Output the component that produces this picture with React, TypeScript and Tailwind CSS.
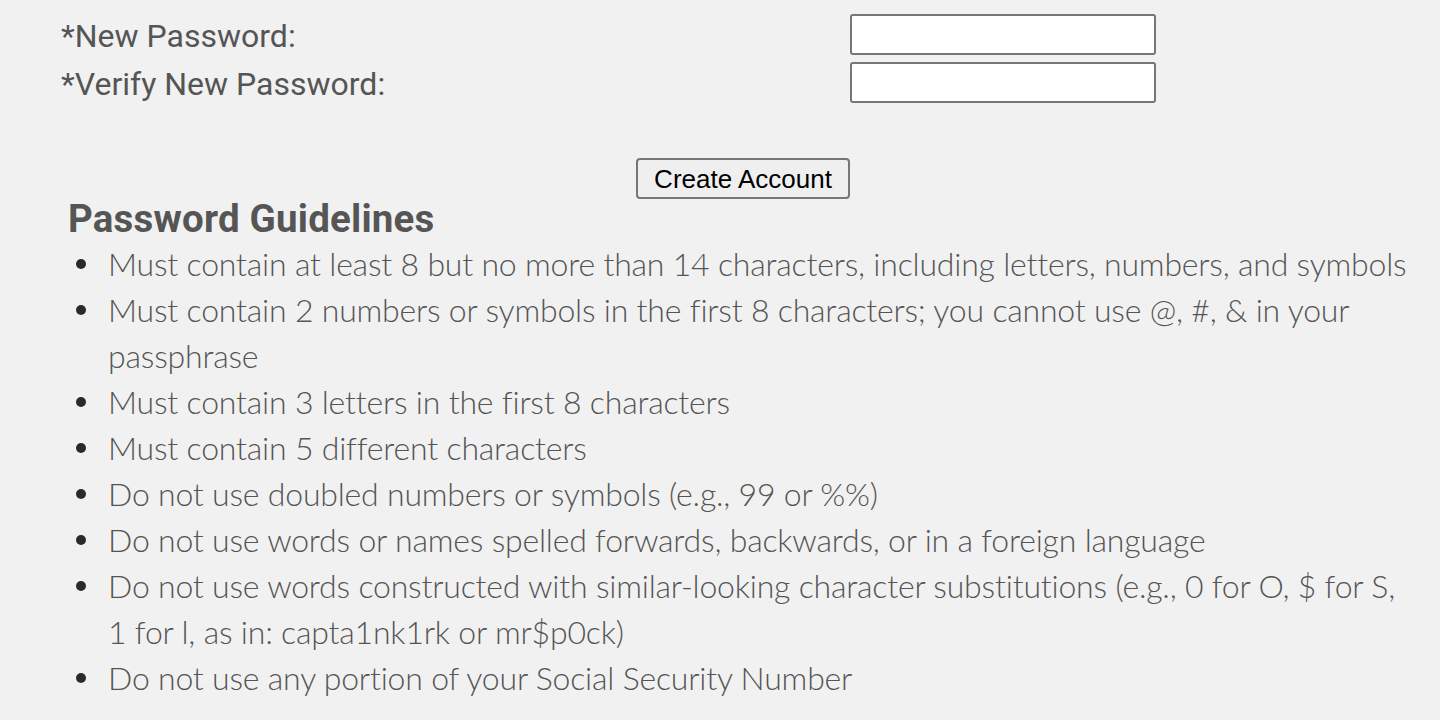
import React from "react";

const items: string[][] = [
  ["Must contain at least 8 but no more than 14 characters, including letters, numbers, and symbols"],
  ["Must contain 2 numbers or symbols in the first 8 characters; you cannot use @, #, & in your", "passphrase"],
  ["Must contain 3 letters in the first 8 characters"],
  ["Must contain 5 different characters"],
  ["Do not use doubled numbers or symbols (e.g., 99 or %%)"],
  ["Do not use words or names spelled forwards, backwards, or in a foreign language"],
  ["Do not use words constructed with similar-looking character substitutions (e.g., 0 for O, $ for S,", "1 for l, as in: capta1nk1rk or mr$p0ck)"],
  ["Do not use any portion of your Social Security Number"],
];

export default function App() {
  return (
    <div className="w-[1440px] h-[720px] overflow-hidden bg-[#f1f1f1] text-[#555]" style={{ fontFamily: "Roboto, 'Liberation Sans', sans-serif" }}>
      <div className="pt-[12px] pl-[61px]">
        <div className="grid grid-cols-[789px_306px]">
          <div className="h-[48px] flex items-center text-[32px] leading-[48px]">*New Password:</div>
          <div className="h-[48px] pt-[2px]">
            <input type="password" className="block w-[306px] h-[41px] bg-white border-2 border-[#767676] rounded-[3px]" />
          </div>
          <div className="h-[48px] flex items-center text-[32px] leading-[48px]">*Verify New Password:</div>
          <div className="h-[48px] pt-[2px]">
            <input type="password" className="block w-[306px] h-[41px] bg-white border-2 border-[#767676] rounded-[3px]" />
          </div>
        </div>
        <div className="w-[1364px] flex justify-center mt-[50px]">
          <button className="w-[214px] h-[41px] bg-[#efefef] border-2 border-[#767676] rounded-[4px] text-black text-[26px] leading-none" style={{ fontFamily: "'Liberation Sans', Arial, sans-serif" }}>
            Create Account
          </button>
        </div>
        <h2 className="ml-[7px] text-[38.5px] font-bold leading-[40px] tracking-[0.2px]">Password Guidelines</h2>
        <ul className="mt-[2px] font-light text-[32px] leading-[46px] tracking-[-0.2px]" style={{ fontFamily: "Lato, Roboto, sans-serif" }}>
          {items.map((lines, i) => (
            <li key={i} className="flex">
              <div className="w-[47px] h-[46px] flex items-center pl-[15px] shrink-0">
                <span className="w-[10px] h-[10px] rounded-full bg-[#2a2a2a]" />
              </div>
              <div>
                {lines.map((l, j) => (
                  <div key={j}>{l}</div>
                ))}
              </div>
            </li>
          ))}
        </ul>
      </div>
    </div>
  );
}
